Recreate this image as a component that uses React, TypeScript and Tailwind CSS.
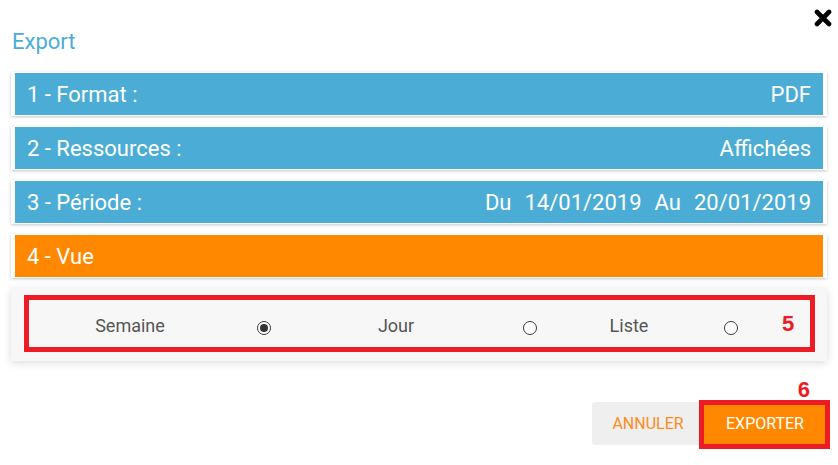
import React from "react";

const steps = [
  { label: "1 - Format :", value: "PDF" },
  { label: "2 - Ressources :", value: "Affichées" },
];

const Radio = ({ checked }: { checked?: boolean }) => (
  <span className="flex h-[14px] w-[14px] items-center justify-center rounded-full border-[1.5px] border-[#3a3a3a] bg-white">
    {checked && <span className="h-[8px] w-[8px] rounded-full bg-[#333]" />}
  </span>
);

const Bar = ({ children, orange }: { children: React.ReactNode; orange?: boolean }) => (
  <div className="bg-white px-[4px] pt-[1px] pb-[1px] shadow-[0_1px_3px_rgba(0,0,0,0.22)]">
    <div
      className={
        orange
          ? "flex h-[42px] items-center justify-between bg-[#ff8800] px-[12px] text-[22px] text-white"
          : "flex h-[42px] items-center justify-between bg-[#4badd6] px-[12px] text-[22px] text-white"
      }
    >
      {children}
    </div>
  </div>
);

export default function App() {
  return (
    <div className="relative h-[465px] w-[838px] overflow-hidden bg-white font-['Roboto',sans-serif]">
      <svg
        className="absolute left-[814px] top-[9px]"
        width="18"
        height="18"
        viewBox="0 0 18 18"
      >
        <path d="M3 3 L15 15 M15 3 L3 15" stroke="#000" strokeWidth="4.6" strokeLinecap="round" />
      </svg>

      <h1 className="ml-[12px] mt-[29px] text-[22px] leading-[26px] text-[#4badd6]">Export</h1>

      <div className="mx-[11px] mt-[17px] flex flex-col gap-[10px]">
        {steps.map((s) => (
          <Bar key={s.label}>
            <span>{s.label}</span>
            <span>{s.value}</span>
          </Bar>
        ))}
        <Bar>
          <span>3 - Période :</span>
          <span className="flex">
            <span>Du</span>
            <span className="ml-[13px]">14/01/2019</span>
            <span className="ml-[13px]">Au</span>
            <span className="ml-[13px]">20/01/2019</span>
          </span>
        </Bar>
        <Bar orange>
          <span>4 - Vue</span>
        </Bar>

        <div className="bg-[#f7f7f7] pl-[13px] pr-[12px] pt-[7px] pb-[9px] shadow-[0_2px_8px_rgba(0,0,0,0.14)]">
          <div className="flex h-[57px] items-center border-[5px] border-[#ed1c24] text-[18px] text-[#555]">
            <span className="ml-[41px] mt-[3px] w-[120px] text-center">Semaine</span>
            <span className="ml-[64px] mt-[9px] flex w-[20px] justify-center">
              <Radio checked />
            </span>
            <span className="ml-[62px] mt-[3px] w-[120px] text-center">Jour</span>
            <span className="ml-[64px] mt-[9px] flex w-[20px] justify-center">
              <Radio />
            </span>
            <span className="ml-[29px] mt-[3px] w-[120px] text-center">Liste</span>
            <span className="ml-[32px] mt-[9px] flex w-[20px] justify-center">
              <Radio />
            </span>
            <span className="ml-[41px] font-['Liberation_Sans',sans-serif] text-[22px] font-bold text-[#ed1c24]">
              5
            </span>
          </div>
        </div>
      </div>

      <div className="mt-[41px] flex justify-end pr-[12px] text-[16px]">
        <button className="h-[43px] w-[112px] rounded-l-[3px] bg-[#efefef] uppercase text-[#ff8c1a]">ANNULER</button>
        <div className="relative">
          <button className="h-[43px] w-[122px] bg-[#ff8800] uppercase text-white">EXPORTER</button>
          <div className="absolute -left-[5px] -right-[4px] -top-[2px] -bottom-[4px] border-[5px] border-[#ed1c24]" />
          <span className="absolute right-[16px] -top-[23px] font-['Liberation_Sans',sans-serif] text-[22px] font-bold leading-[22px] text-[#ed1c24]">
            6
          </span>
        </div>
      </div>
    </div>
  );
}
